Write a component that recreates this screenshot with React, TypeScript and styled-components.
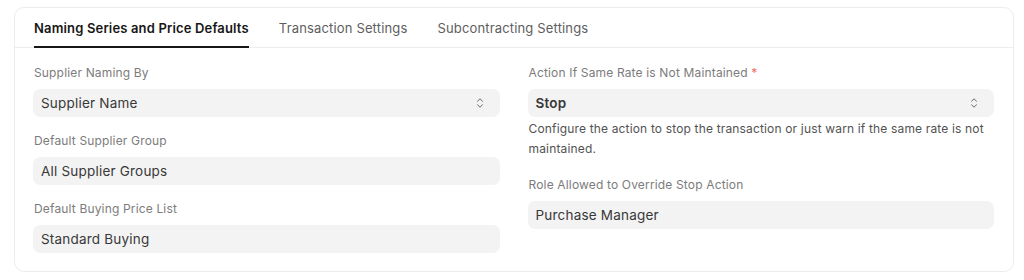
import styled, {createGlobalStyle} from "styled-components";

const GlobalStyle = createGlobalStyle`
    body {
        margin: 0;
        background: #ffffff;
        font-family: Inter, "Noto Sans", sans-serif;
        letter-spacing: 0.01em;
        color: #171717;
    }
`;

const tabs = ['Naming Series and Price Defaults', 'Transaction Settings', 'Subcontracting Settings'];

const SelectIcon = () => (
    <svg width="8" height="12" viewBox="0 0 8 12" fill="none">
        <path d="M1.5 4.2 L4 1.8 L6.5 4.2" stroke="#6b6b6b" strokeWidth="1" strokeLinecap="round" strokeLinejoin="round"/>
        <path d="M1.5 7.8 L4 10.2 L6.5 7.8" stroke="#6b6b6b" strokeWidth="1" strokeLinecap="round" strokeLinejoin="round"/>
    </svg>
);

const App = () => {
    return (
        <>
            <GlobalStyle/>
            <Page>
                <Card>
                    <TabBar>
                        { tabs.map((tab, index) => (
                            <Tab key={ tab } $active={ index === 0 }>{ tab }</Tab>
                        )) }
                    </TabBar>
                    <Body>
                        <Column>
                            <Field>
                                <Label>Supplier Naming By</Label>
                                <Input>
                                    Supplier Name
                                    <IconSlot><SelectIcon/></IconSlot>
                                </Input>
                            </Field>
                            <Field>
                                <Label>Default Supplier Group</Label>
                                <Input>All Supplier Groups</Input>
                            </Field>
                            <Field>
                                <Label>Default Buying Price List</Label>
                                <Input>Standard Buying</Input>
                            </Field>
                        </Column>
                        <Column>
                            <Field>
                                <Label>Action If Same Rate is Not Maintained <Required>*</Required></Label>
                                <Input $bold>
                                    Stop
                                    <IconSlot><SelectIcon/></IconSlot>
                                </Input>
                                <Help>
                                    Configure the action to stop the transaction or just warn if the same rate is not maintained.
                                </Help>
                            </Field>
                            <Field>
                                <Label>Role Allowed to Override Stop Action</Label>
                                <Input>Purchase Manager</Input>
                            </Field>
                        </Column>
                    </Body>
                </Card>
            </Page>
        </>
    )
}

const Page = styled.div`
    padding: 7px 0 0 14px;
`;

const Card = styled.div`
    width: 1000px;
    box-sizing: border-box;
    border: 1px solid #ededed;
    border-radius: 10px;
    background: #ffffff;
`;

const TabBar = styled.div`
    display: flex;
    gap: 30px;
    padding: 0 19px;
    border-bottom: 1px solid #ededed;
`;

const Tab = styled.div<{ $active?: boolean }>`
    font-size: 13px;
    line-height: 20px;
    padding: 10px 0 8px;
    font-weight: ${ p => p.$active ? 600 : 400 };
    color: ${ p => p.$active ? '#171717' : '#5e5e5e' };
    border-bottom: 2px solid ${ p => p.$active ? '#171717' : 'transparent' };
    margin-bottom: -1px;
`;

const Body = styled.div`
    display: grid;
    grid-template-columns: 1fr 1fr;
    column-gap: 28px;
    padding: 17px 19px 2px 18px;
`;

const Column = styled.div`
    display: flex;
    flex-direction: column;
`;

const Field = styled.div`
    margin-bottom: 16px;
`;

const Label = styled.div`
    font-size: 12px;
    line-height: 16px;
    color: #7c7c7c;
    margin-bottom: 8px;
    padding-left: 1px;
`;

const Required = styled.span`
    color: #f56b6b;
`;

const Input = styled.div<{ $bold?: boolean }>`
    position: relative;
    height: 28px;
    display: flex;
    align-items: center;
    padding: 0 8px;
    border-radius: 7px;
    background: #f3f3f3;
    font-size: 13.5px;
    letter-spacing: 0.015em;
    color: #383838;
    font-weight: ${ p => p.$bold ? 600 : 400 };
`;

const IconSlot = styled.span`
    position: absolute;
    right: 16px;
    top: 8px;
    display: flex;
`;

const Help = styled.div`
    margin: 2px 0 3px;
    font-size: 12px;
    line-height: 19.5px;
    color: #525252;
    padding-left: 1px;
`;

export default App;
